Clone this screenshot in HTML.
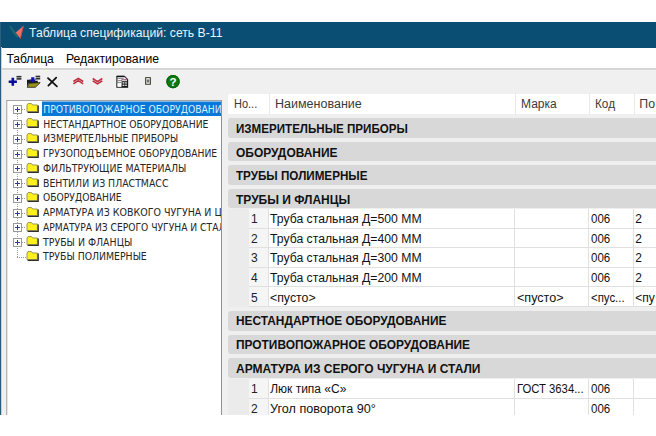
<!DOCTYPE html>
<html lang="ru">
<head>
<meta charset="utf-8">
<title>Таблица спецификаций: сеть В-11</title>
<style>
html,body{margin:0;padding:0;background:#fff;}
body{width:656px;height:436px;overflow:hidden;position:relative;font-family:"Liberation Sans","DejaVu Sans",sans-serif;color:#000;}
.r,.t,.sel,.pm,.fd,.vd,.hd2,.ic{position:absolute;}
.t{white-space:nowrap;transform-origin:0 50%;}
#clip{position:absolute;left:0;top:22px;width:656px;height:393px;overflow:hidden;}
#page{position:absolute;left:0;top:-22px;width:656px;height:436px;}
#treeclip{position:absolute;left:7px;top:100px;width:214px;height:315px;overflow:hidden;}
#treeclip>div{position:absolute;left:-7px;top:-100px;}
.sel{background:#0a78d7;}
.pm{width:7px;height:7px;border:1px solid #9a9a9a;background:#fff;}
.pm:before{content:"";position:absolute;left:1px;top:3px;width:5px;height:1px;background:#3636a4;}
.pm:after{content:"";position:absolute;left:3px;top:1px;width:1px;height:5px;background:#3636a4;}
.vd{width:1px;background:repeating-linear-gradient(to bottom,#9a9a9a 0 1px,transparent 1px 2px);}
.hd2{height:1px;background:repeating-linear-gradient(to right,#9a9a9a 0 1px,transparent 1px 2px);}
</style>
</head>
<body>
<div id="clip"><div id="page">
<div class="r" style="left:0;top:22px;width:656px;height:393px;background:#f0f0f0"></div>
<div class="r" style="left:0;top:22px;width:656px;height:25.5px;background:#0b4e73"></div>
<div class="r" style="left:1px;top:47.5px;width:655px;height:21.5px;background:#fff"></div>
<div class="r" style="left:1px;top:68px;width:655px;height:2px;background:#d5d5d5"></div><div class="r" style="left:1px;top:70px;width:655px;height:1px;background:#f4f4f4"></div>
<div class="r" style="left:6px;top:100px;width:216px;height:330px;background:#fff;box-sizing:border-box;border:1px solid #a2a5a8;border-right-color:#8e9296;border-left-color:#b6b6b6"></div>
<div class="r" style="left:228.00px;top:94.00px;width:428.00px;height:321.00px;background:#efefef;"></div>
<div class="r" style="left:228.00px;top:94.00px;width:428.00px;height:20.30px;background:#fff;border-radius:2px 0 0 0"></div>
<div class="r" style="left:268.70px;top:94.00px;width:1.00px;height:20.30px;background:#e8e8e8;"></div>
<div class="r" style="left:515.00px;top:94.00px;width:1.00px;height:20.30px;background:#e8e8e8;"></div>
<div class="r" style="left:589.00px;top:94.00px;width:1.00px;height:20.30px;background:#e8e8e8;"></div>
<div class="r" style="left:634.00px;top:94.00px;width:1.00px;height:20.30px;background:#e8e8e8;"></div>
<div class="r" style="left:228.00px;top:118.00px;width:432.00px;height:19.60px;background:#d8d8d8;border-radius:3px 0 0 3px"></div>
<div class="r" style="left:228.00px;top:141.58px;width:432.00px;height:19.60px;background:#d8d8d8;border-radius:3px 0 0 3px"></div>
<div class="r" style="left:228.00px;top:165.16px;width:432.00px;height:19.60px;background:#d8d8d8;border-radius:3px 0 0 3px"></div>
<div class="r" style="left:228.00px;top:188.74px;width:432.00px;height:19.60px;background:#d8d8d8;border-radius:3px 0 0 3px"></div>
<div class="r" style="left:228.00px;top:208.70px;width:20.60px;height:98.10px;background:#ebebeb;"></div>
<div class="r" style="left:248.60px;top:208.70px;width:20.00px;height:98.10px;background:#f5f5f5;"></div>
<div class="r" style="left:268.60px;top:208.70px;width:387.40px;height:98.10px;background:#fff;"></div>
<div class="r" style="left:268.10px;top:208.70px;width:1.00px;height:98.10px;background:#e0e0e0;"></div>
<div class="r" style="left:514.00px;top:208.70px;width:1.00px;height:98.10px;background:#e0e0e0;"></div>
<div class="r" style="left:587.80px;top:208.70px;width:1.00px;height:98.10px;background:#e0e0e0;"></div>
<div class="r" style="left:632.80px;top:208.70px;width:1.00px;height:98.10px;background:#e0e0e0;"></div>
<div class="r" style="left:248.60px;top:227.52px;width:407.40px;height:1.00px;background:#e0e0e0;"></div>
<div class="r" style="left:248.60px;top:247.14px;width:407.40px;height:1.00px;background:#e0e0e0;"></div>
<div class="r" style="left:248.60px;top:266.76px;width:407.40px;height:1.00px;background:#e0e0e0;"></div>
<div class="r" style="left:248.60px;top:286.38px;width:407.40px;height:1.00px;background:#e0e0e0;"></div>
<div class="r" style="left:248.60px;top:306.00px;width:407.40px;height:1.00px;background:#e0e0e0;"></div>
<div class="r" style="left:228.00px;top:311.20px;width:432.00px;height:19.60px;background:#d8d8d8;border-radius:3px 0 0 3px"></div>
<div class="r" style="left:228.00px;top:334.78px;width:432.00px;height:19.60px;background:#d8d8d8;border-radius:3px 0 0 3px"></div>
<div class="r" style="left:228.00px;top:358.36px;width:432.00px;height:19.60px;background:#d8d8d8;border-radius:3px 0 0 3px"></div>
<div class="r" style="left:228.00px;top:378.70px;width:20.60px;height:36.30px;background:#ebebeb;"></div>
<div class="r" style="left:248.60px;top:378.70px;width:20.00px;height:36.30px;background:#f5f5f5;"></div>
<div class="r" style="left:268.60px;top:378.70px;width:387.40px;height:36.30px;background:#fff;"></div>
<div class="r" style="left:268.10px;top:378.70px;width:1.00px;height:36.30px;background:#e0e0e0;"></div>
<div class="r" style="left:514.00px;top:378.70px;width:1.00px;height:36.30px;background:#e0e0e0;"></div>
<div class="r" style="left:587.80px;top:378.70px;width:1.00px;height:36.30px;background:#e0e0e0;"></div>
<div class="r" style="left:632.80px;top:378.70px;width:1.00px;height:36.30px;background:#e0e0e0;"></div>
<div class="r" style="left:248.60px;top:397.52px;width:407.40px;height:1.00px;background:#e0e0e0;"></div>
<div id="treeclip"><div>
<div class="vd" style="left:17px;top:113.7px;height:143.8px"></div>
<div class="hd2" style="left:22px;top:109.2px;width:4px"></div>
<div class="hd2" style="left:22px;top:124.0px;width:4px"></div>
<div class="hd2" style="left:22px;top:138.8px;width:4px"></div>
<div class="hd2" style="left:22px;top:153.5px;width:4px"></div>
<div class="hd2" style="left:22px;top:168.3px;width:4px"></div>
<div class="hd2" style="left:22px;top:183.1px;width:4px"></div>
<div class="hd2" style="left:22px;top:197.9px;width:4px"></div>
<div class="hd2" style="left:22px;top:212.7px;width:4px"></div>
<div class="hd2" style="left:22px;top:227.4px;width:4px"></div>
<div class="hd2" style="left:22px;top:242.2px;width:4px"></div>
<div class="hd2" style="left:17px;top:257.0px;width:9px"></div>
<div class="sel" style="left:42px;top:101px;width:179px;height:1px;background:#84bbeb"></div>
<div class="sel" style="left:42px;top:102px;width:179px;height:14px"></div>
<i class="pm" style="left:13px;top:105.20px"></i>
<svg class="fd" style="left:25.6px;top:102.40px" width="14" height="12" viewBox="0 0 14 12"><path d="M1 3 L2 1.6 L5.6 1.6 L6.6 3 L11.4 3 L11.4 9.6 L1 9.6 Z" fill="#fff01e" stroke="#9a9650" stroke-width="1"/><path d="M12.2 3.6 V10.4 H1.6" fill="none" stroke="#2e2e2e" stroke-width="1.3"/></svg>
<i class="pm" style="left:13px;top:119.98px"></i>
<svg class="fd" style="left:25.6px;top:117.18px" width="14" height="12" viewBox="0 0 14 12"><path d="M1 3 L2 1.6 L5.6 1.6 L6.6 3 L11.4 3 L11.4 9.6 L1 9.6 Z" fill="#fff01e" stroke="#9a9650" stroke-width="1"/><path d="M12.2 3.6 V10.4 H1.6" fill="none" stroke="#2e2e2e" stroke-width="1.3"/></svg>
<i class="pm" style="left:13px;top:134.76px"></i>
<svg class="fd" style="left:25.6px;top:131.96px" width="14" height="12" viewBox="0 0 14 12"><path d="M1 3 L2 1.6 L5.6 1.6 L6.6 3 L11.4 3 L11.4 9.6 L1 9.6 Z" fill="#fff01e" stroke="#9a9650" stroke-width="1"/><path d="M12.2 3.6 V10.4 H1.6" fill="none" stroke="#2e2e2e" stroke-width="1.3"/></svg>
<i class="pm" style="left:13px;top:149.54px"></i>
<svg class="fd" style="left:25.6px;top:146.74px" width="14" height="12" viewBox="0 0 14 12"><path d="M1 3 L2 1.6 L5.6 1.6 L6.6 3 L11.4 3 L11.4 9.6 L1 9.6 Z" fill="#fff01e" stroke="#9a9650" stroke-width="1"/><path d="M12.2 3.6 V10.4 H1.6" fill="none" stroke="#2e2e2e" stroke-width="1.3"/></svg>
<i class="pm" style="left:13px;top:164.32px"></i>
<svg class="fd" style="left:25.6px;top:161.52px" width="14" height="12" viewBox="0 0 14 12"><path d="M1 3 L2 1.6 L5.6 1.6 L6.6 3 L11.4 3 L11.4 9.6 L1 9.6 Z" fill="#fff01e" stroke="#9a9650" stroke-width="1"/><path d="M12.2 3.6 V10.4 H1.6" fill="none" stroke="#2e2e2e" stroke-width="1.3"/></svg>
<i class="pm" style="left:13px;top:179.10px"></i>
<svg class="fd" style="left:25.6px;top:176.30px" width="14" height="12" viewBox="0 0 14 12"><path d="M1 3 L2 1.6 L5.6 1.6 L6.6 3 L11.4 3 L11.4 9.6 L1 9.6 Z" fill="#fff01e" stroke="#9a9650" stroke-width="1"/><path d="M12.2 3.6 V10.4 H1.6" fill="none" stroke="#2e2e2e" stroke-width="1.3"/></svg>
<i class="pm" style="left:13px;top:193.88px"></i>
<svg class="fd" style="left:25.6px;top:191.08px" width="14" height="12" viewBox="0 0 14 12"><path d="M1 3 L2 1.6 L5.6 1.6 L6.6 3 L11.4 3 L11.4 9.6 L1 9.6 Z" fill="#fff01e" stroke="#9a9650" stroke-width="1"/><path d="M12.2 3.6 V10.4 H1.6" fill="none" stroke="#2e2e2e" stroke-width="1.3"/></svg>
<i class="pm" style="left:13px;top:208.66px"></i>
<svg class="fd" style="left:25.6px;top:205.86px" width="14" height="12" viewBox="0 0 14 12"><path d="M1 3 L2 1.6 L5.6 1.6 L6.6 3 L11.4 3 L11.4 9.6 L1 9.6 Z" fill="#fff01e" stroke="#9a9650" stroke-width="1"/><path d="M12.2 3.6 V10.4 H1.6" fill="none" stroke="#2e2e2e" stroke-width="1.3"/></svg>
<i class="pm" style="left:13px;top:223.44px"></i>
<svg class="fd" style="left:25.6px;top:220.64px" width="14" height="12" viewBox="0 0 14 12"><path d="M1 3 L2 1.6 L5.6 1.6 L6.6 3 L11.4 3 L11.4 9.6 L1 9.6 Z" fill="#fff01e" stroke="#9a9650" stroke-width="1"/><path d="M12.2 3.6 V10.4 H1.6" fill="none" stroke="#2e2e2e" stroke-width="1.3"/></svg>
<i class="pm" style="left:13px;top:238.22px"></i>
<svg class="fd" style="left:25.6px;top:235.42px" width="14" height="12" viewBox="0 0 14 12"><path d="M1 3 L2 1.6 L5.6 1.6 L6.6 3 L11.4 3 L11.4 9.6 L1 9.6 Z" fill="#fff01e" stroke="#9a9650" stroke-width="1"/><path d="M12.2 3.6 V10.4 H1.6" fill="none" stroke="#2e2e2e" stroke-width="1.3"/></svg>
<svg class="fd" style="left:25.6px;top:250.20px" width="14" height="12" viewBox="0 0 14 12"><path d="M1 3 L2 1.6 L5.6 1.6 L6.6 3 L11.4 3 L11.4 9.6 L1 9.6 Z" fill="#fff01e" stroke="#9a9650" stroke-width="1"/><path d="M12.2 3.6 V10.4 H1.6" fill="none" stroke="#2e2e2e" stroke-width="1.3"/></svg>
<span class="t" style='left:43.20px;top:103.00px;font-size:10.3px;line-height:13px;color:#d8eeff;font-family:"DejaVu Sans Condensed","DejaVu Sans","Liberation Sans",sans-serif;'>ПРОТИВОПОЖАРНОЕ ОБОРУДОВАНИЕ</span>
<span class="t" style='left:43.20px;top:118.00px;font-size:10.3px;line-height:13px;color:#262626;font-family:"DejaVu Sans Condensed","DejaVu Sans","Liberation Sans",sans-serif;'>НЕСТАНДАРТНОЕ ОБОРУДОВАНИЕ</span>
<span class="t" style='left:43.20px;top:132.00px;font-size:10.3px;line-height:13px;color:#262626;font-family:"DejaVu Sans Condensed","DejaVu Sans","Liberation Sans",sans-serif;'>ИЗМЕРИТЕЛЬНЫЕ ПРИБОРЫ</span>
<span class="t" style='left:43.20px;top:147.00px;font-size:10.3px;line-height:13px;color:#262626;font-family:"DejaVu Sans Condensed","DejaVu Sans","Liberation Sans",sans-serif;transform:scaleX(0.9930);'>ГРУЗОПОДЪЕМНОЕ ОБОРУДОВАНИЕ</span>
<span class="t" style='left:43.20px;top:162.00px;font-size:10.3px;line-height:13px;color:#262626;font-family:"DejaVu Sans Condensed","DejaVu Sans","Liberation Sans",sans-serif;transform:scaleX(1.0180);'>ФИЛЬТРУЮЩИЕ МАТЕРИАЛЫ</span>
<span class="t" style='left:43.20px;top:177.00px;font-size:10.3px;line-height:13px;color:#262626;font-family:"DejaVu Sans Condensed","DejaVu Sans","Liberation Sans",sans-serif;transform:scaleX(1.0110);'>ВЕНТИЛИ ИЗ ПЛАСТМАСС</span>
<span class="t" style='left:43.20px;top:191.00px;font-size:10.3px;line-height:13px;color:#262626;font-family:"DejaVu Sans Condensed","DejaVu Sans","Liberation Sans",sans-serif;transform:scaleX(0.9940);'>ОБОРУДОВАНИЕ</span>
<span class="t" style='left:43.20px;top:206.00px;font-size:10.3px;line-height:13px;color:#262626;font-family:"DejaVu Sans Condensed","DejaVu Sans","Liberation Sans",sans-serif;transform:scaleX(1.0230);'>АРМАТУРА ИЗ КОВКОГО ЧУГУНА И ЦВЕТНЫХ МЕТАЛЛОВ</span>
<span class="t" style='left:43.20px;top:221.00px;font-size:10.3px;line-height:13px;color:#262626;font-family:"DejaVu Sans Condensed","DejaVu Sans","Liberation Sans",sans-serif;transform:scaleX(0.9900);'>АРМАТУРА ИЗ СЕРОГО ЧУГУНА И СТАЛИ</span>
<span class="t" style='left:43.20px;top:236.00px;font-size:10.3px;line-height:13px;color:#262626;font-family:"DejaVu Sans Condensed","DejaVu Sans","Liberation Sans",sans-serif;transform:scaleX(1.0160);'>ТРУБЫ И ФЛАНЦЫ</span>
<span class="t" style='left:43.20px;top:250.00px;font-size:10.3px;line-height:13px;color:#262626;font-family:"DejaVu Sans Condensed","DejaVu Sans","Liberation Sans",sans-serif;transform:scaleX(1.0080);'>ТРУБЫ ПОЛИМЕРНЫЕ</span>
</div></div>
<span class="t" style='left:28.60px;top:24.00px;font-size:12.8px;line-height:17px;color:#eaf4fb;transform:scaleX(0.9512);'>Таблица спецификаций: сеть В-11</span>
<span class="t" style='left:6.40px;top:51.00px;font-size:12.1px;line-height:16px;color:#000;'>Таблица</span>
<span class="t" style='left:65.90px;top:51.00px;font-size:12.1px;line-height:16px;color:#000;transform:scaleX(1.0093);'>Редактирование</span>
<span class="t" style='left:233.50px;top:96.00px;font-size:12.3px;line-height:16px;color:#3a3a3a;transform:scaleX(0.8928);'>Но...</span>
<span class="t" style='left:274.50px;top:96.00px;font-size:12.3px;line-height:16px;color:#3a3a3a;transform:scaleX(1.0176);'>Наименование</span>
<span class="t" style='left:520.50px;top:96.00px;font-size:12.3px;line-height:16px;color:#3a3a3a;transform:scaleX(0.9778);'>Марка</span>
<span class="t" style='left:594.50px;top:96.00px;font-size:12.3px;line-height:16px;color:#3a3a3a;transform:scaleX(0.9559);'>Код</span>
<span class="t" style='left:639.30px;top:96.00px;font-size:12.3px;line-height:16px;color:#3a3a3a;'>По</span>
<span class="t" style='left:235.60px;top:121.00px;font-size:12.3px;line-height:16px;color:#111;font-weight:700;transform:scaleX(0.9428);'>ИЗМЕРИТЕЛЬНЫЕ ПРИБОРЫ</span>
<span class="t" style='left:235.60px;top:145.00px;font-size:12.3px;line-height:16px;color:#111;font-weight:700;transform:scaleX(0.9728);'>ОБОРУДОВАНИЕ</span>
<span class="t" style='left:235.60px;top:168.00px;font-size:12.3px;line-height:16px;color:#111;font-weight:700;transform:scaleX(0.9472);'>ТРУБЫ ПОЛИМЕРНЫЕ</span>
<span class="t" style='left:235.60px;top:192.00px;font-size:12.3px;line-height:16px;color:#111;font-weight:700;transform:scaleX(0.9745);'>ТРУБЫ И ФЛАНЦЫ</span>
<span class="t" style='left:251.00px;top:211.00px;font-size:12px;line-height:16px;color:#222;'>1</span>
<span class="t" style='left:270.20px;top:211.00px;font-size:12px;line-height:16px;color:#111;transform:scaleX(1.0185);'>Труба стальная Д=500 ММ</span>
<span class="t" style='left:590.60px;top:211.00px;font-size:12px;line-height:16px;color:#111;transform:scaleX(0.9585);'>006</span>
<span class="t" style='left:635.30px;top:211.00px;font-size:12px;line-height:16px;color:#111;'>2</span>
<span class="t" style='left:251.00px;top:231.00px;font-size:12px;line-height:16px;color:#222;'>2</span>
<span class="t" style='left:270.20px;top:231.00px;font-size:12px;line-height:16px;color:#111;transform:scaleX(1.0185);'>Труба стальная Д=400 ММ</span>
<span class="t" style='left:590.60px;top:231.00px;font-size:12px;line-height:16px;color:#111;transform:scaleX(0.9585);'>006</span>
<span class="t" style='left:635.30px;top:231.00px;font-size:12px;line-height:16px;color:#111;'>2</span>
<span class="t" style='left:251.00px;top:250.00px;font-size:12px;line-height:16px;color:#222;'>3</span>
<span class="t" style='left:270.20px;top:250.00px;font-size:12px;line-height:16px;color:#111;transform:scaleX(1.0185);'>Труба стальная Д=300 ММ</span>
<span class="t" style='left:590.60px;top:250.00px;font-size:12px;line-height:16px;color:#111;transform:scaleX(0.9585);'>006</span>
<span class="t" style='left:635.30px;top:250.00px;font-size:12px;line-height:16px;color:#111;'>2</span>
<span class="t" style='left:251.00px;top:270.00px;font-size:12px;line-height:16px;color:#222;'>4</span>
<span class="t" style='left:270.20px;top:270.00px;font-size:12px;line-height:16px;color:#111;transform:scaleX(1.0185);'>Труба стальная Д=200 ММ</span>
<span class="t" style='left:590.60px;top:270.00px;font-size:12px;line-height:16px;color:#111;transform:scaleX(0.9585);'>006</span>
<span class="t" style='left:635.30px;top:270.00px;font-size:12px;line-height:16px;color:#111;'>2</span>
<span class="t" style='left:251.00px;top:290.00px;font-size:12px;line-height:16px;color:#222;'>5</span>
<span class="t" style='left:270.20px;top:290.00px;font-size:12px;line-height:16px;color:#111;transform:scaleX(1.0265);'>&lt;пусто&gt;</span>
<span class="t" style='left:517.00px;top:290.00px;font-size:12px;line-height:16px;color:#111;transform:scaleX(1.0490);'>&lt;пусто&gt;</span>
<span class="t" style='left:590.60px;top:290.00px;font-size:12px;line-height:16px;color:#111;transform:scaleX(0.9498);'>&lt;пус...</span>
<span class="t" style='left:635.30px;top:290.00px;font-size:12px;line-height:16px;color:#111;'>&lt;пу</span>
<span class="t" style='left:235.60px;top:313.00px;font-size:12.3px;line-height:16px;color:#111;font-weight:700;transform:scaleX(0.9658);'>НЕСТАНДАРТНОЕ ОБОРУДОВАНИЕ</span>
<span class="t" style='left:235.60px;top:337.00px;font-size:12.3px;line-height:16px;color:#111;font-weight:700;transform:scaleX(0.9674);'>ПРОТИВОПОЖАРНОЕ ОБОРУДОВАНИЕ</span>
<span class="t" style='left:235.60px;top:361.00px;font-size:12.3px;line-height:16px;color:#111;font-weight:700;transform:scaleX(0.9756);'>АРМАТУРА ИЗ СЕРОГО ЧУГУНА И СТАЛИ</span>
<span class="t" style='left:251.00px;top:381.00px;font-size:12px;line-height:16px;color:#222;'>1</span>
<span class="t" style='left:270.20px;top:381.00px;font-size:12px;line-height:16px;color:#111;'>Люк типа «С»</span>
<span class="t" style='left:517.00px;top:381.00px;font-size:12px;line-height:16px;color:#111;transform:scaleX(0.9407);'>ГОСТ 3634...</span>
<span class="t" style='left:590.60px;top:381.00px;font-size:12px;line-height:16px;color:#111;transform:scaleX(0.9585);'>006</span>
<span class="t" style='left:251.00px;top:401.00px;font-size:12px;line-height:16px;color:#222;'>2</span>
<span class="t" style='left:270.20px;top:401.00px;font-size:12px;line-height:16px;color:#111;transform:scaleX(1.0513);'>Угол поворота 90°</span>
<span class="t" style='left:590.60px;top:401.00px;font-size:12px;line-height:16px;color:#111;transform:scaleX(0.9585);'>006</span>
<svg class="ic" style="left:0;top:22px" width="40" height="26" viewBox="0 22 40 26">
<polygon points="9,25.8 11.2,26.6 15.8,32.2 18.6,36.2 17.2,37.8 13.2,33.6" fill="#28746f" opacity="0.7"/>
<polygon points="23.9,25.6 15.7,32.6 20.6,39" fill="#ee6f68"/>
<polygon points="23.9,25.6 22.6,27.4 20.2,37.4 20.6,39" fill="#a83a3a" opacity="0.8"/>
</svg>
<svg class="ic" style="left:0;top:70px" width="200" height="24" viewBox="0 70 200 24">
<!-- plus with lines -->
<path d="M11.5 77.7h2.6v2.7h2.8v2.6h-2.8v2.7h-2.6v-2.7h-2.8v-2.6h2.8z" fill="#0c0c9c"/>
<rect x="16.5" y="75.9" width="4.9" height="1.6" fill="#2c2c2c"/><rect x="16.5" y="78.1" width="4.9" height="1.6" fill="#2c2c2c"/>
<!-- open folder with arrow -->
<path d="M27 79.8h3.2l1 1h6.6v2.6h-9.4l-1.4 3.9z" fill="#1a1a1a"/>
<path d="M27.2 87.3 L29.4 83.2 L40.2 82.6 L35.4 87.3 Z" fill="#98921a" stroke="#1a1a1a" stroke-width="0.8"/>
<path d="M31.2 77.2h3.2v2.2h2l-3.6 3.4l-3.6-3.4h2z" fill="#1212a6"/>
<rect x="35.6" y="75.7" width="4.6" height="1.6" fill="#2c2c2c"/><rect x="35.6" y="77.9" width="4.6" height="1.6" fill="#2c2c2c"/>
<!-- X -->
<path d="M48 78.1 L56.9 86.3 M56.2 77.7 L48.4 85.6" stroke="#111" stroke-width="1.8" fill="none" stroke-linecap="round"/>
<!-- chevrons -->
<path d="M73.4 81.5 L78.3 78.4 L83.2 81.5 M73.4 83.8 L78.3 80.7 L83.2 83.8" stroke="#bf2c3c" stroke-width="1.5" fill="none"/>
<path d="M92.7 78.5 L97.5 81.6 L102.3 78.5 M92.7 80.8 L97.5 83.9 L102.3 80.8" stroke="#bf2c3c" stroke-width="1.5" fill="none"/>
<!-- document -->
<path d="M116.9 76.4 H124.4 L127.6 79.4 V87.3 H116.9 Z" fill="#fafafa" stroke="#151515" stroke-width="1.1"/>
<path d="M116.9 76.5 H124.2" stroke="#111" stroke-width="1.3"/>
<path d="M124.2 76.4 L127.7 79.6" stroke="#7a3050" stroke-width="1"/>
<path d="M117.6 78.4h6M117.6 80.6h4.4M117.6 82.6h3.6" stroke="#777" stroke-width="0.9" fill="none"/>
<path d="M121.4 79.8h5.8" stroke="#803050" stroke-width="0.9"/>
<rect x="121.6" y="81.2" width="6" height="6" fill="#1a1a1a"/>
<rect x="122.6" y="82.2" width="1.8" height="1.4" fill="#e8e8e8"/><rect x="125.2" y="82.2" width="1.6" height="1.4" fill="#e8e8e8"/>
<rect x="122.6" y="84.6" width="1.8" height="1.4" fill="#e8e8e8"/><rect x="125.2" y="84.6" width="1.6" height="1.4" fill="#e8e8e8"/>
<rect x="117.6" y="83.4" width="3.4" height="3.2" fill="#fff"/>
<!-- small strip -->
<rect x="144.9" y="77" width="6.2" height="7.9" fill="#d4d97a" opacity="0.7"/>
<rect x="145.7" y="77.7" width="4.6" height="6.5" fill="#fff" stroke="#1c1c1c" stroke-width="0.9"/>
<path d="M147.2 79.3v3.4M148.8 79.3v3.4M147.2 81h1.6" stroke="#333" stroke-width="0.8" fill="none"/>
<!-- help -->
<circle cx="173" cy="81.6" r="6.7" fill="#0b7a10"/>
<circle cx="173" cy="81.6" r="6.2" fill="none" stroke="#075e0a" stroke-width="1"/>
<text x="173" y="85.6" text-anchor="middle" font-family="Liberation Sans, sans-serif" font-weight="700" font-size="11.5" fill="#fff">?</text>
</svg>

<div class="r" style="left:0;top:22px;width:1px;height:393px;background:#2a5f7c"></div><div class="r" style="left:1px;top:47px;width:1px;height:368px;background:#c4d2db"></div><div class="r" style="left:7px;top:101px;width:1px;height:314px;background:#e6e6e6"></div>
</div></div>
</body>
</html>
